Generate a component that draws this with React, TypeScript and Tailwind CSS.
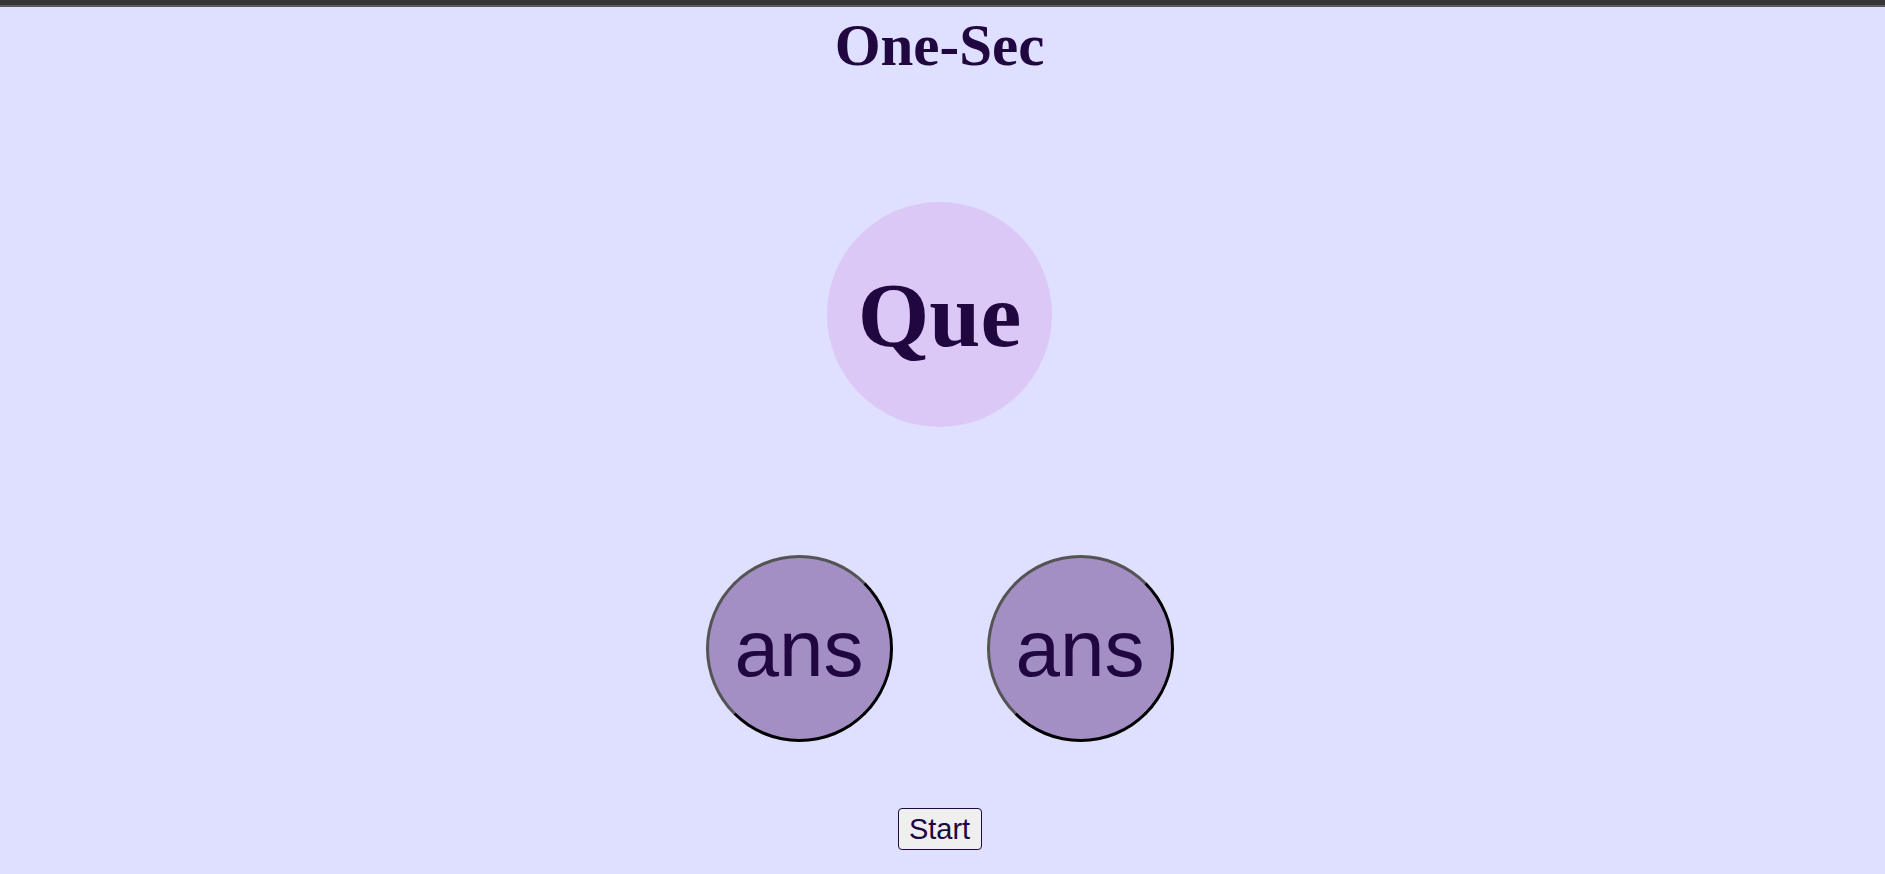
import React from "react";

export default function App() {
  return (
    <div className="min-h-[874px] w-full bg-[#dfdfff] flex flex-col">
      <div className="h-[5px] bg-[#363636]" />
      <div className="h-[2px] bg-[#5b5b5b]" />
      <div className="flex flex-col items-center pr-[6px]">
        <h1 className="mt-[4px] text-[59px] leading-[68px] font-bold text-[#21073f] [font-family:'Liberation_Serif','Times_New_Roman',serif]">
          One-Sec
        </h1>
        <div className="mt-[123px] w-[225px] h-[225px] rounded-full bg-[#dcc8f6] flex items-center justify-center">
          <span className="text-[92px] font-bold text-[#21073f] [font-family:'Liberation_Serif','Times_New_Roman',serif]">
            Que
          </span>
        </div>
        <div className="mt-[128px] flex gap-[94px]">
          <div className="w-[187px] h-[187px] rounded-full bg-[#a38fc3] border-[3px] border-black [border-style:outset] flex items-center justify-center">
            <span className="text-[80px] text-[#21073f] [font-family:'Liberation_Sans',Arial,sans-serif]">ans</span>
          </div>
          <div className="w-[187px] h-[187px] rounded-full bg-[#a38fc3] border-[3px] border-black [border-style:outset] flex items-center justify-center">
            <span className="text-[80px] text-[#21073f] [font-family:'Liberation_Sans',Arial,sans-serif]">ans</span>
          </div>
        </div>
        <button className="mt-[66px] w-[84px] h-[42px] rounded-[4px] border border-[#21073f] bg-[#efefef] text-[29px] leading-none text-[#21073f] flex items-center justify-center [font-family:'Liberation_Sans',Arial,sans-serif]">
          Start
        </button>
      </div>
    </div>
  );
}
